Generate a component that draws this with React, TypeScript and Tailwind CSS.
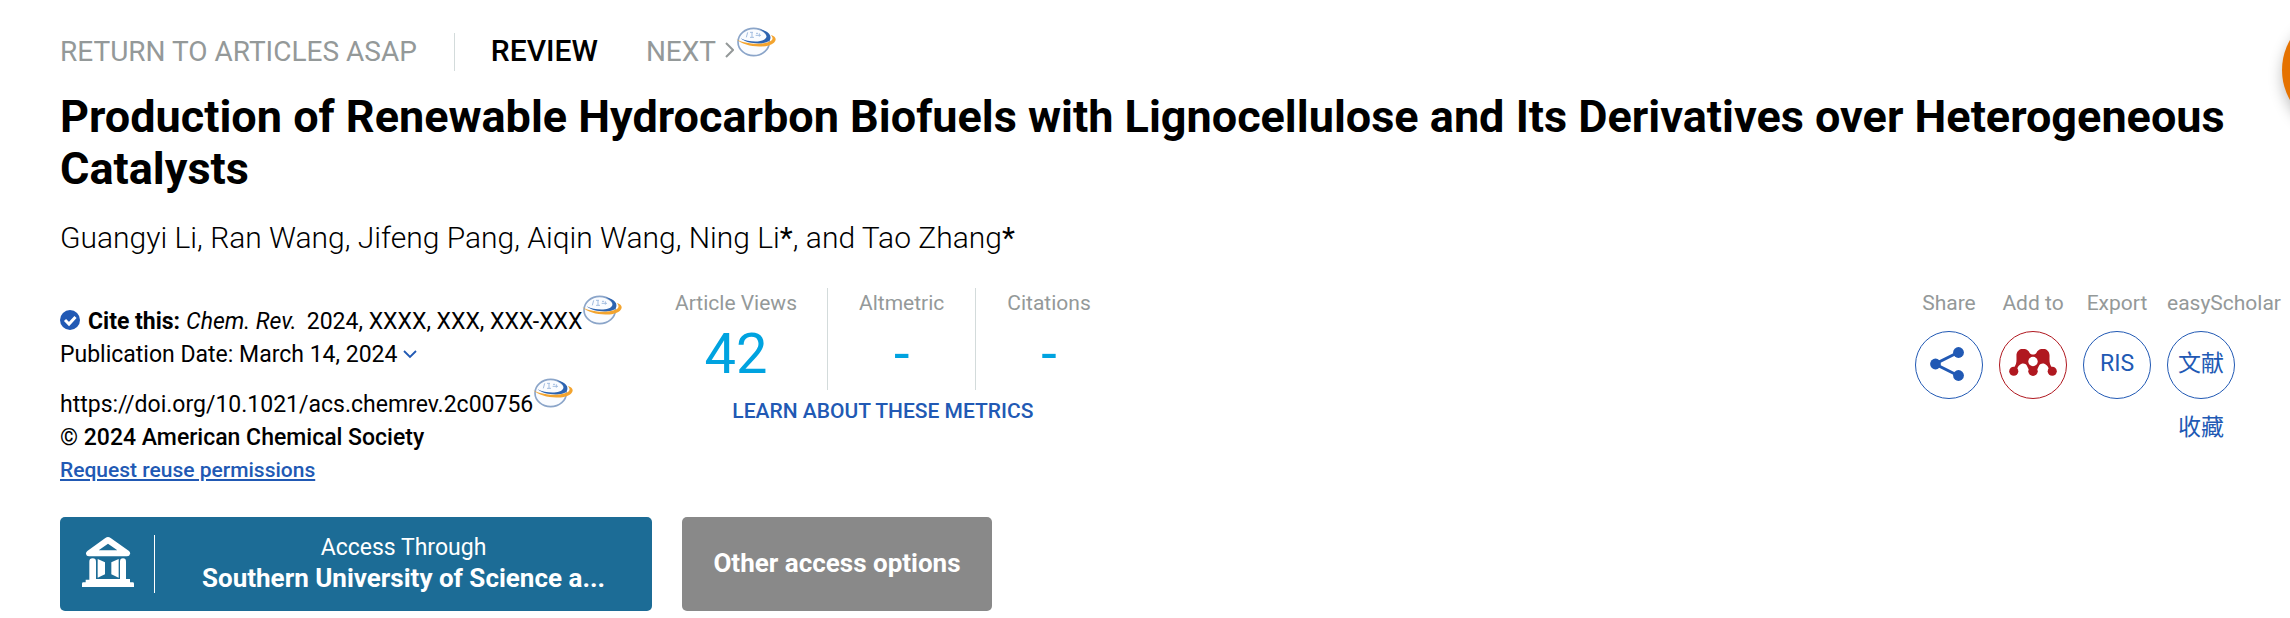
import type { ReactNode } from "react";

const METRICS = [
  { label: "Article Views", value: "42", box: "pr-[30px]" },
  { label: "Altmetric", value: "-", box: "px-[31px] border-l border-[#d3dbdb]" },
  { label: "Citations", value: "-", box: "pl-[31px] border-l border-[#d3dbdb]" },
];

function PlanetIcon({ className = "" }: { className?: string }) {
  return (
    <svg viewBox="0 0 120 90" className={`w-10 h-[30px] shrink-0 ${className}`} aria-hidden="true">
      <ellipse cx="53" cy="45" rx="47" ry="41" fill="#fafcff" stroke="#8ba5c9" strokeWidth="5" />
      <path d="M14 34C40 47 84 48 91 31C94 21 82 12 70 7C98 11 109 28 101 40C88 55 34 52 14 34Z" fill="#2c63b0" />
      <path d="M1 37C30 54 92 55 108 39C112 33 108 28 104 24C120 28 123 38 114 47C90 67 24 60 1 37Z" fill="#f3a42f" />
      <path
        d="M35 16L31 31M42 16H51M48 16V31M42 31H54M60 19H66M59 25H75M70 19V29"
        fill="none"
        stroke="#a3bde0"
        strokeWidth="3"
      />
    </svg>
  );
}

function ShareIcon() {
  return (
    <svg viewBox="0 0 34 34" className="w-[34px] h-[34px] mr-1" aria-hidden="true">
      <path d="M29 5L5 17L29 29" fill="none" stroke="#2159b4" strokeWidth="3" />
      <circle cx="28.5" cy="5.5" r="5.4" fill="#2159b4" />
      <circle cx="5.5" cy="17" r="5.4" fill="#2159b4" />
      <circle cx="28.5" cy="28.5" r="5.4" fill="#2159b4" />
    </svg>
  );
}

function MendeleyIcon() {
  return (
    <svg viewBox="0 0 142 80" className="w-12 h-[27px]" aria-hidden="true">
      <g fill="#b01820">
        <path d="M22 20C22 -6 55 -6 61 12C66 18 76 18 81 12C87 -6 120 -6 120 20C120 34 118 46 130 58L119 62C116 50 108 43 100 43C90 43 88 52 84 60H58C54 52 52 43 42 43C34 43 26 50 23 62L12 58C24 46 22 34 22 20Z" />
        <circle cx="14" cy="66" r="13.5" />
        <circle cx="71" cy="66" r="14" />
        <circle cx="128" cy="66" r="13.5" />
      </g>
      <circle cx="71" cy="37" r="14" fill="#fff" />
    </svg>
  );
}

function BankIcon() {
  return (
    <svg viewBox="0 0 156 150" className="w-[52px] h-[50px] mb-1" aria-hidden="true">
      <g fill="#fff">
        <path
          fillRule="evenodd"
          d="M70 3Q78 -3 86 3L141 42Q146 47 144 51Q143 58 135 58H21Q13 58 12 51Q11 46 16 42ZM78 20L50 40H106Z"
        />
        <path d="M22 128V74Q22 64 32 64Q42 64 42 74V126H114V74Q114 64 123 64Q132 64 132 74V126H144V136H152Q156 136 156 140V150H0V140Q0 136 4 136H11V128Z" />
        <path d="M47 66L69 76V112L47 122Z" />
        <path d="M110 66L88 76V112L110 122Z" />
      </g>
    </svg>
  );
}

interface ToolProps {
  label: string;
  children: ReactNode;
  align?: string;
  color?: string;
}

function Tool({ label, children, align = "items-center", color = "border-[#2159b4]" }: ToolProps) {
  return (
    <div className={`flex flex-col w-[68px] ${align}`}>
      <span className="text-[21px] leading-[30px] text-[#949999] whitespace-nowrap">{label}</span>
      <button
        aria-label={label}
        className={`mt-[13px] w-[68px] h-[68px] rounded-full border flex items-start justify-center text-[#2159b4] ${color}`}
      >
        {children}
      </button>
    </div>
  );
}

export default function App() {
  return (
    <main className="relative overflow-hidden bg-white text-black pl-[60px] pt-8 pb-[7px] font-['Roboto','Noto_Sans_CJK_SC',sans-serif]">
      <button
        aria-label="Open panel"
        className="absolute top-[10px] -right-[112px] w-[120px] h-[120px] rounded-full bg-[#e57200] shadow-[0_6px_14px_rgba(0,0,0,0.25)]"
      />

      <nav className="flex items-center h-10 text-[28px] leading-10 text-[#949999]">
        <a href="#asap">RETURN TO ARTICLES ASAP</a>
        <span className="ml-[37px] w-px h-[38px] bg-[#d3dbdb]" />
        <strong className="ml-9 pb-0.5 text-[30px] font-medium text-black">REVIEW</strong>
        <a href="#next" className="ml-12 flex items-center">
          NEXT
          <svg viewBox="0 0 10 16" className="ml-2 w-[10px] h-4 mb-1" aria-hidden="true">
            <path d="M2 1L9 8L2 15" fill="none" stroke="#949999" strokeWidth="2" />
          </svg>
        </a>
        <PlanetIcon className="ml-0.5 mb-5" />
      </nav>

      <h1 className="mt-[19px] mr-14 text-[45px] leading-[52px] font-bold">
        Production of Renewable Hydrocarbon Biofuels with Lignocellulose and Its Derivatives over
        Heterogeneous Catalysts
      </h1>
      <p className="mt-[23px] text-[30px] leading-10 font-light">
        Guangyi Li, Ran Wang, Jifeng Pang, Aiqin Wang, Ning Li<strong>*</strong>, and Tao Zhang
        <strong>*</strong>
      </p>

      <div className="mt-[30px] pr-[55px] flex items-start">
        <section className="w-[615px] pt-[17px] text-[23px] leading-[33px]">
          <div className="flex items-center h-[33px]">
            <svg viewBox="0 0 20 20" className="mr-2 mb-1 w-5 h-5" aria-hidden="true">
              <circle cx="10" cy="10" r="10" fill="#2159b4" />
              <path d="M5 10L9 14L15.5 7" fill="none" stroke="#fff" strokeWidth="3" />
            </svg>
            <strong>Cite this:</strong>
            <em className="ml-1.5">Chem. Rev.</em>
            <span className="ml-2.5">2024, XXXX, XXX, XXX-XXX</span>
            <PlanetIcon className="mb-6" />
          </div>
          <div className="flex items-center">
            Publication Date: March 14, 2024
            <button aria-label="Publication history" className="ml-1.5">
              <svg viewBox="0 0 14 9" className="w-[14px] h-[9px]" aria-hidden="true">
                <path d="M1 1L7 7L13 1" fill="none" stroke="#2159b4" strokeWidth="1.8" />
              </svg>
            </button>
          </div>
          <div className="mt-[17px] flex items-center h-[33px]">
            <a href="#doi">https://doi.org/10.1021/acs.chemrev.2c00756</a>
            <PlanetIcon className="mb-6" />
          </div>
          <p className="font-medium">© 2024 American Chemical Society</p>
          <a href="#reuse" className="block w-fit text-[21px] leading-[33px] font-medium text-[#2159b4] underline">
            Request reuse permissions
          </a>
        </section>

        <section className="flex flex-col items-center">
          <div className="flex text-center">
            {METRICS.map((m) => (
              <div key={m.label} className={m.box}>
                <div className="text-[21px] leading-[30px] text-[#949999]">{m.label}</div>
                <div className="text-[56px] leading-[72px] text-[#00a3e0]">{m.value}</div>
              </div>
            ))}
          </div>
          <a href="#metrics" className="mt-[5px] text-[21px] leading-8 font-medium text-[#2159b4]">
            LEARN ABOUT THESE METRICS
          </a>
        </section>

        <section className="ml-auto flex gap-4 text-[23px] leading-[64px]">
          <Tool label="Share">
            <span className="h-16 flex items-center"><ShareIcon /></span>
          </Tool>
          <Tool label="Add to" color="border-[#b01820]">
            <span className="h-[60px] flex items-center"><MendeleyIcon /></span>
          </Tool>
          <Tool label="Export">RIS</Tool>
          <Tool label="easyScholar" align="items-start">
            <span className="w-[46px]">文献收藏</span>
          </Tool>
        </section>
      </div>

      <div className="mt-[30px] flex gap-[30px] text-white">
        <button className="w-[592px] h-[94px] pl-[22px] rounded-[5px] bg-[#1c6c96] flex items-center">
          <BankIcon />
          <span className="ml-5 w-px h-[58px] bg-white" />
          <span className="flex-1 pb-0.5 text-center leading-[31px]">
            <span className="block text-[23px]">Access Through</span>
            <span className="block text-[26px] font-bold">Southern University of Science a...</span>
          </span>
        </button>
        <button className="w-[310px] h-[94px] pb-0.5 rounded-[5px] bg-[#898989] text-[26px] font-bold">
          Other access options
        </button>
      </div>
    </main>
  );
}
